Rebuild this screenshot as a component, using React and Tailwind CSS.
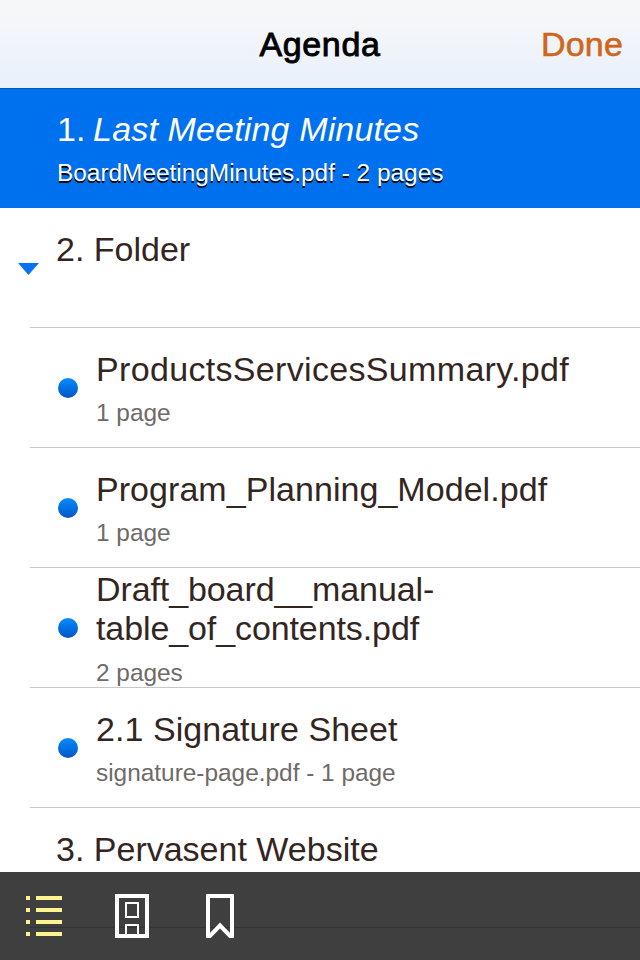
const Item = ({ title, sub, wide, narrow }) => (
  <div className="flex h-[120px] ml-[30px] border-b border-[#c8c7cc]">
    <div className="w-[66px] flex items-center pl-[28px] shrink-0">
      <div className="w-[20px] h-[20px] rounded-full bg-gradient-to-b from-[#0a8cff] to-[#0055c4] mt-[1px]" />
    </div>
    <div className="flex-1 flex flex-col justify-start text-[#33261f]">
      <div className={narrow ? "mt-[2px] text-[34px] leading-[39px] tracking-[-0.1px] whitespace-pre-line" : wide ? "mt-[22px] text-[34px] leading-[39px] tracking-[0.33px]" : "mt-[22px] text-[34px] leading-[39px] tracking-[0.05px]"}>{title}</div>
      <div className={narrow ? "text-[24.4px] leading-[28px] mt-[11px] text-[#6f6a68]" : "text-[24.4px] leading-[28px] mt-[10px] text-[#6f6a68]"}>{sub}</div>
    </div>
  </div>
);

export default function App() {
  return (
    <div className="relative w-[640px] h-[960px] overflow-hidden bg-white font-['Liberation_Sans',Arial,sans-serif]">
      <header className="relative h-[89px] border-b border-[#0059b8] bg-gradient-to-b from-[#f8f8f8] to-[#e9f0fb] flex items-center justify-center">
        <span className="text-[34px] text-black tracking-[0.6px] [-webkit-text-stroke:0.9px_#000]">Agenda</span>
        <span className="absolute right-[17px] top-[23px] text-[34px] leading-[42px] tracking-[0.2px] text-[#d0661b] [-webkit-text-stroke:0.6px_#d0661b]">Done</span>
      </header>
      <div className="h-[119px] bg-[#0071ee] pl-[57px] pt-[20px] text-white">
        <div className="text-[34px] leading-[40px] tracking-[0.1px]">1. <em className="ml-[-2px] tracking-[0.15px]">Last Meeting Minutes</em></div>
        <div className="text-[24.4px] leading-[30px] mt-[9px] [text-shadow:0_2px_0_#000]">BoardMeetingMinutes.pdf - 2 pages</div>
      </div>
      <div className="relative h-[120px] ml-[30px] border-b border-[#c8c7cc] pl-[26px] pt-[21px] text-[34px] leading-[40px] text-[#33261f]">
        2. Folder
        <svg className="absolute left-[-12px] top-[55px]" width="21" height="12" viewBox="0 0 21 12"><path d="M0 0H21L10.5 12Z" fill="#0a72f0" /></svg>
      </div>
      <Item title="ProductsServicesSummary.pdf" sub="1 page" wide />
      <Item title="Program_Planning_Model.pdf" sub="1 page" />
      <Item title={"Draft_board__manual-\ntable_of_contents.pdf"} sub="2 pages" narrow />
      <Item title="2.1 Signature Sheet" sub="signature-page.pdf - 1 page" />
      <div className="h-[120px] pl-[56px] pt-[21px] text-[34px] leading-[40px] text-[#33261f]">3. Pervasent Website</div>
      <nav className="absolute left-0 right-0 bottom-0 h-[88px] bg-[#3f3f3f] flex items-start pt-[22px]">
        <div className="absolute left-[30px] right-0 top-[55px] h-px bg-[#333333]" />
        <svg className="relative ml-[26px]" width="36" height="42" viewBox="0 0 36 42" fill="#fff38f">
          <rect x="0" y="2" width="4" height="4" /><rect x="10" y="2" width="26" height="4" />
          <rect x="0" y="14" width="4" height="4" /><rect x="10" y="14" width="26" height="4" />
          <rect x="0" y="26" width="4" height="4" /><rect x="10" y="26" width="26" height="4" />
          <rect x="0" y="38" width="4" height="4" /><rect x="10" y="38" width="26" height="4" />
        </svg>
        <svg className="relative ml-[53px]" width="34" height="44" viewBox="0 0 34 44" fill="none" stroke="#fff" strokeWidth="4">
          <rect x="2" y="2" width="30" height="40" />
          <rect x="11" y="9" width="12" height="14" strokeWidth="2" />
          <path d="M11 42V31H23V42" strokeWidth="2" />
        </svg>
        <svg className="relative ml-[57px]" width="28" height="44" viewBox="0 0 28 44" fill="none" stroke="#fff" strokeWidth="4">
          <path d="M2 44V2H26V44L14 31.5Z" />
        </svg>
      </nav>
    </div>
  );
}
